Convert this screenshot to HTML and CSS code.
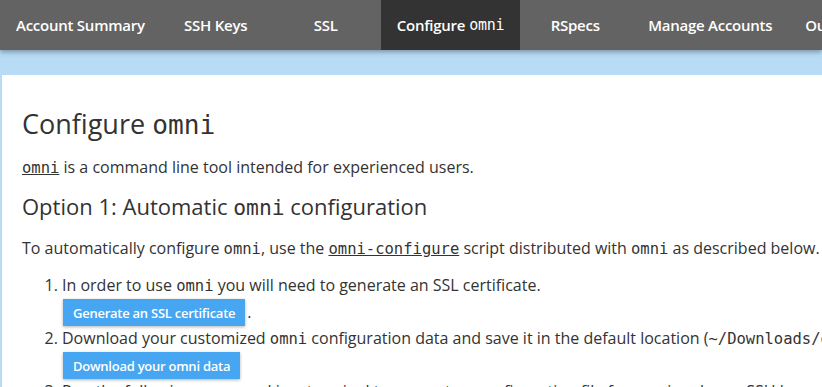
FILE: index.html
```html
<!DOCTYPE html>
<html lang="en">
<head>
  <meta charset="UTF-8" />
  <meta name="viewport" content="width=device-width, initial-scale=1" />
  <title>Configure omni</title>
  <link rel="stylesheet" href="styles.css">
</head>
<body>
<header>
  <nav>
    <a href="#">Account Summary</a>
    <a href="#">SSH Keys</a>
    <a href="#">SSL</a>
    <a href="#" class="active">Configure <code>omni</code></a>
    <a href="#">RSpecs</a>
    <a href="#" class="wide">Manage Accounts</a>
    <a href="#" class="loose">Outside</a>
  </nav>
</header>

<main>
  <h1>Configure <code>omni</code></h1>

  <p><a href="#" class="code-link"><code>omni</code></a> is a command line tool intended for experienced users.</p>

  <h2>Option 1: Automatic <code>omni</code> configuration</h2>

  <p>To automatically configure <code>omni</code>, use the <a href="#" class="code-link"><code>omni-configure</code></a> script distributed with <code>omni</code> as described below.</p>

  <ol>
    <li>
      In order to use <code>omni</code> you will need to generate an SSL certificate.<br>
      <button>Generate an SSL certificate</button>.
    </li>
    <li>
      Download your customized <code>omni</code> configuration data and save it in the default location (<code>~/Downloads/omni-bundle.zip</code>):<br>
      <button>Download your omni data</button>
    </li>
    <li>
      Run the following command in a terminal to generate a configuration file for omni and your SSH keys.
    </li>
  </ol>
</main>
</body>
</html>
```

FILE: styles.css
```css
:root {
  --nav-grey: #636363;
  --nav-dark: #333333;
  --sky: #b9dcf6;
  --btn-blue: #46a6f1;
  --ink: #333333;
}
body {
  margin: 0;
  font-family: 'Open Sans', 'Liberation Sans', sans-serif;
  background-color: var(--sky);
  color: var(--ink);
  overflow: hidden;
}
header {
  background-color: var(--nav-grey);
  height: 50px;
  box-shadow: 0 2px 5px rgba(0, 0, 0, 0.35);
  position: relative;
  z-index: 1;
}
nav {
  display: flex;
  height: 50px;
  white-space: nowrap;
}
nav a {
  display: flex;
  flex-shrink: 0;
  align-items: center;
  justify-content: center;
  min-width: 110px;
  padding: 0 16px;
  box-sizing: border-box;
  color: #ffffff;
  text-decoration: none;
  font-weight: 600;
  font-size: 15px;
  letter-spacing: -0.25px;
}
nav a.wide {
  padding: 0 17px 0 18px;
}
nav a.loose {
  justify-content: flex-start;
}
nav a code {
  font-family: 'DejaVu Sans Mono', monospace;
  font-size: 15px;
  font-weight: normal;
  margin-left: 4px;
  letter-spacing: -0.3px;
}
nav a.active {
  background-color: var(--nav-dark);
}
main {
  background-color: #ffffff;
  margin: 25px 0 0 2px;
  padding: 33px 20px 40px 20px;
  min-height: 400px;
  white-space: nowrap;
}
code {
  font-family: 'DejaVu Sans Mono', monospace;
  font-size: 0.97em;
}
h1 {
  font-weight: 400;
  font-size: 27px;
  margin: 0 0 14px 0;
  line-height: 32px;
}
h2 {
  font-weight: 400;
  font-size: 22px;
  margin: 0 0 14px 0;
  line-height: 28px;
}
p {
  font-size: 16px;
  line-height: 24px;
  margin: 0 0 12px 0;
}
.code-link {
  color: var(--ink);
}
ol {
  margin: 1px 0 0 0;
  padding-left: 40px;
  font-size: 16px;
  line-height: 24px;
}
button {
  background-color: var(--btn-blue);
  color: #ffffff;
  border: none;
  border-radius: 0;
  font-family: 'Open Sans', 'Liberation Sans', sans-serif;
  font-weight: 600;
  font-size: 13px;
  letter-spacing: -0.25px;
  height: 27px;
  padding: 0 10px;
  margin: 1px 2px 0 1px;
  box-shadow: 0 1px 3px rgba(0, 0, 0, 0.3);
  cursor: pointer;
}
```
